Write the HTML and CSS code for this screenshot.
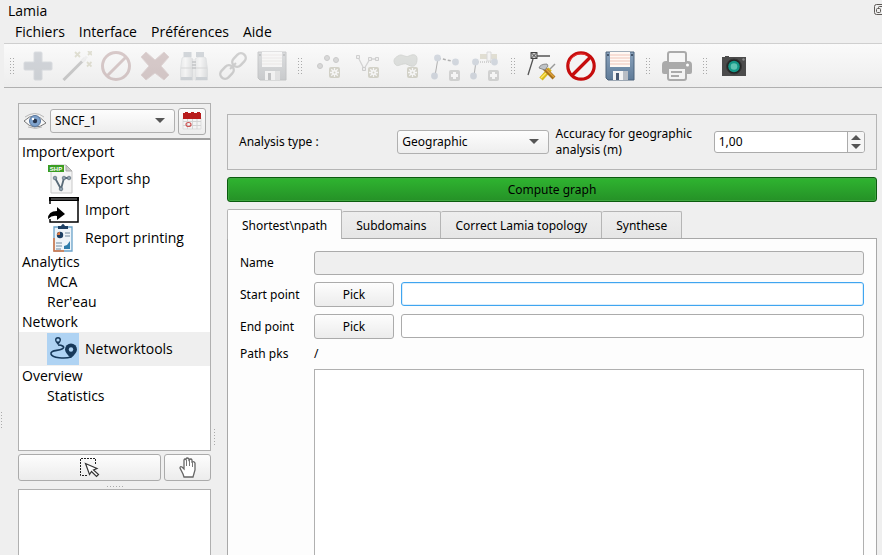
FILE: index.html
```html
<!DOCTYPE html>
<html lang="fr">
<head>
<meta charset="utf-8">
<title>Lamia</title>
<link rel="stylesheet" href="styles.css">
</head>
<body>
<svg class="defs" aria-hidden="true">
  <defs>
    <linearGradient id="steel" x1="0" y1="0" x2="0" y2="1"><stop offset="0" stop-color="#8ba3bd"/><stop offset="1" stop-color="#5f7b98"/></linearGradient>
    <linearGradient id="barrel" x1="0" y1="0" x2="1" y2="0"><stop offset="0" stop-color="#cfd2d4"/><stop offset=".4" stop-color="#f9f9f9"/><stop offset="1" stop-color="#a9aeb2"/></linearGradient>
    <symbol id="floppy" viewBox="0 0 30 30">
      <path d="M1 1h28v28H3l-2-2z" fill="url(#steel)" stroke="#4d637b"/>
      <path d="M5 1h20v15H5z" fill="#fff8f4"/>
      <path d="M5 4h20M5 7h20M5 10h20M5 13h20" stroke="#efc4b8"/>
      <path d="M8 20h15v9H8z" fill="#f4f4f4"/>
      <path d="M18 20h5v9h-5z" fill="#b9bec5"/>
      <path d="M11 22h3v7h-3z" fill="#4a5a72"/>
      <path d="M2 3h2v2H2zM26 3h2v2h-2z" fill="#44566c"/>
    </symbol>
    <symbol id="gear" viewBox="0 0 11 11">
      <rect width="11" height="11" rx="2" fill="#8c8868"/>
      <path d="M5.500 1v9M1 5.500h9M2.300 2.300l6.400 6.400M8.700 2.300L2.300 8.700" stroke="#fff" stroke-width="1.300"/>
      <circle cx="5.500" cy="5.500" r="2.500" fill="#fff"/><circle cx="5.500" cy="5.500" r="1" fill="#8c8868"/>
    </symbol>
    <symbol id="plus" viewBox="0 0 11 11">
      <rect width="11" height="11" rx="2" fill="#888a88"/>
      <path d="M5.500 2v7M2 5.500h7" stroke="#fff" stroke-width="3"/>
    </symbol>
  </defs>
</svg>

<header class="titlebar">
  <span>Lamia</span>
  <button class="float-btn" aria-label="Détacher">
    <svg width="11" height="11" viewBox="0 0 11 11"><rect x=".5" y=".5" width="11" height="10" rx="2" fill="none" stroke="#5c5855"/><path d="M4.500 4.500V3.500q0-1 1-1H9M2.500 5.500q0-1 1-1h2q1 0 1 1v2q0 1-1 1h-2q-1 0-1-1z" fill="none" stroke="#5c5855"/></svg>
  </button>
</header>
<nav class="menubar">
  <a href="#">Fichiers</a><a href="#">Interface</a><a href="#">Préférences</a><a href="#">Aide</a>
</nav>

<div class="toolbar" role="toolbar">
  <i class="grip first"></i>
  <button class="tool" aria-label="Ajouter" disabled><svg viewBox="0 0 30 30"><path d="M12 1h6q1 0 1 1v9h9q1 0 1 1v6q0 1-1 1h-9v9q0 1-1 1h-6q-1 0-1-1v-9H2q-1 0-1-1v-6q0-1 1-1h9V2q0-1 1-1z" fill="#7d8796" stroke="#98a0ac"/></svg></button>
  <button class="tool" aria-label="Outil magique" disabled><svg viewBox="0 0 30 30"><path d="M1.500 29L23 7.500" stroke="#666" stroke-width="3"/><path d="M20 10.500l5-5" stroke="#ddd" stroke-width="3"/><path d="M13 1l5 5m0-5l-5 5M26 0l4 4m0-4l-4 4M25 11l4.500 4.500m0-4.500L25 15.500" stroke="#a9a57c" stroke-width="1.800"/></svg></button>
  <button class="tool" aria-label="Annuler" disabled><svg viewBox="0 0 30 30"><circle cx="15" cy="15" r="13.500" fill="none" stroke="#8f6060" stroke-width="3"/><path d="M6 25L25 6" stroke="#8f6060" stroke-width="3"/></svg></button>
  <button class="tool" aria-label="Supprimer" disabled><svg viewBox="0 0 30 30"><path d="M6 1l9 8 9-8 5 5-8 9 8 9-5 5-9-7-9 7-5-5 8-9-8-9z" fill="#8f6464" stroke="#a98888" stroke-linejoin="round"/></svg></button>
  <button class="tool" aria-label="Rechercher" disabled><svg viewBox="0 0 30 30"><g stroke="#a0a7ad" stroke-width=".7"><path d="M3 7l2-1h6l3 2v21H1.500V18z" fill="url(#barrel)"/><path d="M27 7l-2-1h-6l-3 2v21h12.500V18z" fill="url(#barrel)"/></g><path d="M4.500 1h8v5h-8zM17 1h8v5h-8zM2 26h11v3H2zM17 26h11v3H17z" fill="#7f8c99"/><path d="M13 11h4M13 14h4M13 17h4" stroke="#555b61" stroke-width="1.500"/><path d="M2 17h11M17 17h11" stroke="#999"/></svg></button>
  <button class="tool" aria-label="Lier" disabled><svg viewBox="0 0 30 30"><g fill="none" stroke="#777" stroke-width="2.500"><rect x="-7.500" y="-4.800" width="15" height="9.600" rx="4.800" transform="translate(21 9) rotate(-45)"/><rect x="-7.500" y="-4.800" width="15" height="9.600" rx="4.800" transform="translate(9 21) rotate(-45)"/></g><path d="M12 18l6-6" stroke="#777" stroke-width="2"/></svg></button>
  <button class="tool gray" aria-label="Enregistrer" disabled><svg><use href="#floppy"/></svg></button>
  <i class="grip"></i>
  <button class="tool" aria-label="Créer un point" disabled><svg viewBox="0 0 30 30"><g fill="#999" stroke="#666"><circle cx="6" cy="15" r="2.500"/><circle cx="13" cy="7" r="2.500"/><circle cx="22" cy="9" r="2.500"/></g><use href="#gear" x="15" y="16" width="11" height="11"/></svg></button>
  <button class="tool" aria-label="Créer une ligne" disabled><svg viewBox="0 0 30 30"><path d="M5 6l6 12 6-10h7" fill="none" stroke="#888" stroke-width="1.300"/><g fill="#ddd" stroke="#777"><path d="M3.500 4.500h3v3h-3zM9.500 16.500h3v3h-3zM15.500 6.500h3v3h-3zM22.500 6.500h3v3h-3z"/></g><use href="#gear" x="15" y="16" width="11" height="11"/></svg></button>
  <button class="tool" aria-label="Créer un polygone" disabled><svg viewBox="0 0 30 30"><path d="M6 5c4-3 7 2 11 0s8-2 8 3-2 8-6 7-4-3-8-2-6 3-8 0-1-6 3-8z" fill="#a5aba3" stroke="#868c83"/><use href="#gear" x="15" y="16" width="11" height="11"/></svg></button>
  <button class="tool" aria-label="Ajouter un tronçon" disabled><svg viewBox="0 0 30 30"><path d="M4 25L7 7" stroke="#111" fill="none"/><path d="M7 7l18 4" stroke="#111" stroke-width="1.500" stroke-dasharray="3 2"/><g fill="#8494ab"><circle cx="3.500" cy="25" r="3.400"/><circle cx="6.500" cy="7" r="3.400"/><circle cx="24.500" cy="11" r="3.400"/></g><use href="#plus" x="18" y="19" width="11" height="11"/></svg></button>
  <button class="tool" aria-label="Ajouter un équipement" disabled><svg viewBox="0 0 30 30"><path d="M4 25L6 10" stroke="#111" fill="none"/><path d="M6 11h18" stroke="#111" stroke-dasharray="1 1"/><path d="M10 3h17v5H10z" fill="#b0a883"/><path d="M17 1h4v9h-4z" fill="#eee" stroke="#999"/><g fill="#8494ab"><circle cx="3.500" cy="25" r="3.400"/><circle cx="5.500" cy="11" r="3.400"/><circle cx="24.500" cy="11" r="3.400"/></g><use href="#plus" x="18" y="19" width="11" height="11"/></svg></button>
  <i class="grip"></i>
  <button class="tool" aria-label="Éditer la géométrie"><svg viewBox="0 0 30 30"><path d="M7 5h16M6 8L1 24" stroke="#555" stroke-width="1.300" fill="none"/><path d="M4 1.500h6v6H4zM4 1.500l6 6m0-6l-6 6" fill="#ccc" stroke="#444"/><path d="M28 13L18 23" stroke="#999" stroke-width="1.500"/><path d="M23 18l-9 10" stroke="#d9b91b" stroke-width="4.500"/><path d="M22 19l-8 8" stroke="#ffe867" stroke-width="1.500"/><path d="M17 17l10 10" stroke="#a8721c" stroke-width="4"/><path d="M18 17l9 9" stroke="#dfa33c" stroke-width="1.500"/><path d="M12 17q1-4 8-4l1 2-3 4-3-1z" fill="#bfc3c7" stroke="#777" stroke-width=".8"/></svg></button>
  <button class="tool" aria-label="Arrêter"><svg viewBox="0 0 30 30"><circle cx="15" cy="15" r="13.200" fill="#f4f4f4" stroke="#c60d0d" stroke-width="3.200"/><path d="M5.500 25L25 5.500" stroke="#c60d0d" stroke-width="3.200"/><path d="M3 13a12 12 0 0 1 17-9" stroke="#e33" fill="none"/></svg></button>
  <button class="tool" aria-label="Enregistrer les modifications"><svg><use href="#floppy"/></svg></button>
  <i class="grip"></i>
  <button class="tool" aria-label="Imprimer"><svg viewBox="0 0 30 30"><path d="M4 10h22q4 0 4 4v7q0 2-2 2H2q-2 0-2-2v-7q0-4 4-4z" fill="#aaa"/><path d="M6 12V3q0-2 2-2h14q2 0 2 2v9z" fill="#f6f6f6" stroke="#aaa" stroke-width="2"/><path d="M6 17h18v10q0 2-2 2H8q-2 0-2-2z" fill="#f3f3f3" stroke="#aaa" stroke-width="2"/><path d="M9 21h11M9 25h8" stroke="#aaa" stroke-width="2"/><circle cx="25.500" cy="14" r="1.500" fill="#fff"/></svg></button>
  <i class="grip"></i>
  <button class="tool" aria-label="Photographie"><svg viewBox="0 0 30 30"><path d="M3 6h3V5h4v1h17v19H3z" fill="#4b4b4b"/><circle cx="15" cy="15.500" r="7.500" fill="#222" stroke="#353535"/><circle cx="15" cy="15.500" r="5.800" fill="#149686"/><circle cx="15" cy="15.500" r="3.300" fill="#5dc3b2"/><circle cx="24.500" cy="8.500" r="1.200" fill="#888"/></svg></button>
</div>

<main class="workspace">
  <i class="grip edge"></i>
  <aside class="sidebar">
    <div class="base-bar">
      <svg class="eye" viewBox="0 0 24 20"><path d="M1 10Q12-1 23 12Q11 21 1 10z" fill="#f8f8f8" stroke="#777"/><path d="M2 6Q12-1 21 6M5 16q8 3 14 0" fill="none" stroke="#aaa" stroke-width=".8"/><circle cx="12" cy="10" r="5.500" fill="#7fa3cd" stroke="#5877a0"/><circle cx="12" cy="10" r="2.200" fill="#26334a"/><circle cx="10" cy="8" r="1.200" fill="#fff"/></svg>
      <span class="combo"><select aria-label="Base"><option>SNCF_1</option></select></span>
      <button class="btn calendar" aria-label="Calendrier"><svg viewBox="0 0 20 20"><path d="M1 7h18v11H1z" fill="#f4f4f4" stroke="#ddd"/><path d="M1 10.500h18M1 14.500h18M5.500 8v10M10.500 8v10M15 8v10" stroke="#d4d4d4"/><path d="M1 2h2V1h3v1h3V1h3v1h3V1h3v1h1v6H1z" fill="#b81c1c"/><ellipse cx="6.500" cy="13.500" rx="2.500" ry="2" fill="none" stroke="#cf5353" stroke-width="1.200"/></svg></button>
    </div>
    <ul class="tree">
      <li><a href="#">Import/export</a>
        <ul>
          <li><a class="tall" href="#"><svg class="i28" viewBox="0 0 28 30"><path d="M4 1h15l6 6v22H4z" fill="#f5f5f5" stroke="#c9c9c9"/><path d="M19 1v6h6z" fill="#ccc" stroke="#aaa"/><path d="M1 1h16v7H1z" fill="#3a9d22"/><text x="9" y="7" class="tag">SHP</text><path d="M8 14l6 11 3-11h5" fill="none" stroke="#5a6b78" stroke-width="1.800"/><g fill="#8fa0ae" stroke="#5a6b78" stroke-width=".7"><circle cx="8" cy="14" r="1.800"/><circle cx="17" cy="14" r="1.800"/><circle cx="22" cy="14" r="1.800"/><circle cx="14" cy="25" r="1.800"/></g></svg>Export shp</a></li>
          <li><a class="mid" href="#"><svg class="i33" viewBox="0 0 33 28"><path d="M3 8V2h28v24H3v-3" fill="none" stroke="#000" stroke-width="1.500"/><path d="M2 1h30v4H2z"/><path d="M4 3h26" stroke="#888"/><path d="M1 23q0-8 9-8v-4l8 7-8 6v-4q-5-1-9 3z"/></svg>Import</a></li>
          <li><a class="mid" href="#"><svg class="i33" viewBox="0 0 33 28"><path d="M7 3h18v24H7z" fill="#eef4f9" stroke="#6aa3c9" stroke-width="1.300"/><path d="M7 14v13h10" fill="none" stroke="#dc7742" stroke-width="1.500"/><path d="M11 5V2h3q2-4 4 0h3v3z" fill="#1d3f63"/><circle cx="13" cy="11" r="3.200" fill="#1d3f63"/><path d="M13 11V8a3 3 0 0 0-3 3z" fill="#df7b45"/><path d="M18 9h5M18 12h5M9 19h6M9 22h6M9 25h5" stroke="#9badbd" stroke-width="1.500"/><path d="M17 25v-3l3-1 3-4v8z" fill="#2f7dab"/></svg>Report printing</a></li>
        </ul>
      </li>
      <li><a href="#">Analytics</a>
        <ul><li><a href="#">MCA</a></li><li><a href="#">Rer'eau</a></li></ul>
      </li>
      <li><a href="#">Network</a>
        <ul><li><a class="big selected" href="#"><svg class="net" viewBox="0 0 32 32"><rect width="32" height="32" fill="#afd3f3"/><path d="M11 12c4 0 8 2 4 4s-12 1-11 5 14 5 20 3" fill="none" stroke="#17395a" stroke-width="1.600"/><path d="M11 12q-3-3-3-5a3 3 0 0 1 6 0q0 2-3 5z" fill="#17395a"/><circle cx="11" cy="7" r="1.600" fill="#afd3f3"/><path d="M24 25q-6-5-6-8.500a6 6 0 0 1 12 0Q30 20 24 25z" fill="#17395a"/><circle cx="24" cy="16.500" r="2.200" fill="#afd3f3"/></svg>Networktools</a></li></ul>
      </li>
      <li><a href="#">Overview</a>
        <ul><li><a href="#">Statistics</a></li></ul>
      </li>
    </ul>
    <div class="pickers">
      <button class="btn grow" aria-label="Sélectionner"><svg width="22" height="22" viewBox="0 0 22 22"><path d="M8 18.500H1.500v-17h15V8" fill="none" stroke="#222" stroke-dasharray="2 1"/><path d="M6.500 6.500l4 11 2-3 5 5 2-2-5-4.500 3.500-1.500z" fill="#fff" stroke="#333" stroke-width="1.200"/></svg></button>
      <button class="btn hand" aria-label="Déplacer"><svg width="18" height="22" viewBox="0 0 18 22"><path d="M5 20l-1-3-3-6q0-2 2-1l2 2V3q1-2 2 0V2q1-2 3 0v1q2-2 3 0v2q2-1 3 1v7l-2 7z" fill="#fff" stroke="#666" stroke-width="1.300"/><path d="M7.500 3v6M10.500 3v6M13.500 4v6" stroke="#777"/></svg></button>
    </div>
    <i class="grip flat"></i>
    <div class="preview"></div>
  </aside>
  <i class="grip split"></i>

  <section class="content">
    <div class="group">
      <label for="atype">Analysis type :</label>
      <span class="combo"><select id="atype"><option>Geographic</option></select></span>
      <label for="acc">Accuracy for geographic analysis (m)</label>
      <span class="spin"><input id="acc" type="text" inputmode="decimal" value="1,00"><span class="steps"><button class="up" aria-label="Plus"></button><button class="down" aria-label="Moins"></button></span></span>
    </div>
    <button class="compute">Compute graph</button>
    <div class="tabs" role="tablist">
      <button class="tab active" role="tab" aria-selected="true">Shortest\npath</button><button class="tab" role="tab">Subdomains</button><button class="tab" role="tab">Correct Lamia topology</button><button class="tab" role="tab">Synthese</button>
    </div>
    <div class="panel" role="tabpanel">
      <label for="name">Name</label>
      <input id="name" class="field wide" type="text" disabled>
      <label for="start">Start point</label>
      <button class="btn">Pick</button>
      <input id="start" class="field focus" type="text">
      <label for="end">End point</label>
      <button class="btn">Pick</button>
      <input id="end" class="field" type="text">
      <label for="pks">Path pks</label>
      <span class="wide">/</span>
      <textarea id="pks" class="result"></textarea>
    </div>
  </section>
</main>
</body>
</html>
```
FILE: styles.css
```css
* { box-sizing: border-box; }
body {
  margin: 0;
  height: 100vh;
  overflow: hidden;
  display: flex;
  flex-direction: column;
  background: #efefef;
  color: #000;
  font: 14px/20px "Open Sans", "Noto Sans", sans-serif;
}
button, input, select, textarea { font: inherit; color: inherit; margin: 0; }
button { padding: 0; border: 0; background: none; }
a { color: inherit; text-decoration: none; }
ul { list-style: none; margin: 0; padding: 0; }
svg { display: block; flex: none; }
.defs { position: absolute; width: 0; height: 0; }

.titlebar { display: flex; justify-content: space-between; padding-left: 8px; height: 22px; }
.titlebar span { padding-top: 1px; }
.float-btn { align-self: flex-start; width: 8px; height: 11px; margin-top: 4px; overflow: hidden; }
.menubar { display: flex; gap: 14px; height: 21px; padding-left: 15px; }

.toolbar {
  display: flex;
  align-items: center;
  flex: none;
  height: 45px;
  margin-left: 4px;
  border-top: 1px solid #cfcfcf;
  border-bottom: 1px solid #b0b0b0;
  background: linear-gradient(#fafafa, #ededed);
}
.tool { display: grid; place-items: center; width: 39px; height: 43px; flex: none; }
.tool svg { width: 30px; height: 30px; }
.tool:disabled svg { opacity: .3; }
.tool.gray svg { filter: grayscale(.8); }

.grip {
  flex: none;
  width: 18px;
  height: 17px;
  background: radial-gradient(circle, #aaa 1px, transparent 1px) 0 0 / 3px 3px content-box;
  padding: 0 6px;
}
.toolbar .grip.first { width: 14px; padding: 0 3px 0 5px; }
.grip.edge { width: 18px; padding: 0 15px 0 0; align-self: flex-start; margin-top: 323px; }
.grip.split { width: 16px; padding: 0 11px 0 2px; align-self: flex-start; margin-top: 340px; }
.grip.flat { width: 18px; height: 3px; padding: 0; margin: 4px auto 1px; }

.workspace { display: flex; flex: 1; min-height: 0; padding-right: 5px; }
.sidebar { display: flex; flex-direction: column; width: 193px; flex: none; padding-top: 15px; }
.base-bar {
  display: flex;
  align-items: center;
  gap: 3px;
  height: 37px;
  flex: none;
  padding: 0 4px;
  border: 1px solid #b0b0b0;
  border-bottom: 2px solid #a0a0a0;
  font: 12px/16px "Noto Sans", sans-serif;
}
.eye { width: 24px; height: 20px; }

.combo { position: relative; display: flex; flex: 1; height: 24px; }
.combo select {
  appearance: none;
  width: 100%;
  padding: 0 4px;
  border: 1px solid #b0b0b0;
  border-radius: 3px;
  background: linear-gradient(#fdfdfd, #eee);
}
.combo::after {
  content: "";
  position: absolute;
  right: 10px;
  top: 9px;
  border: 5px solid transparent;
  border-top-color: #555;
  border-bottom: 0;
}
.btn {
  display: grid;
  place-items: center;
  border: 1px solid #ababab;
  border-radius: 3px;
  background: linear-gradient(#fdfdfd, #ececec);
}
.calendar { width: 28px; height: 27px; }
.calendar svg { width: 20px; height: 20px; }

.tree {
  height: 311px;
  flex: none;
  padding-top: 2px;
  border: 1px solid #b0b0b0;
  border-top: 0;
  background: #fff;
}
.tree a { display: flex; align-items: center; height: 20px; padding-left: 3px; }
.tree ul a { padding-left: 28px; }
.tree a.tall { height: 34px; gap: 5px; }
.tree a.mid { height: 28px; gap: 5px; }
.tree a.big { height: 34px; gap: 6px; }
.tree a.selected { background: #efefef; }
.i28 { width: 28px; height: 30px; }
.i33 { width: 33px; height: 28px; }
.net { width: 32px; height: 32px; }
.tag { font: bold 6px "Liberation Sans", sans-serif; fill: #fff; text-anchor: middle; }

.pickers { display: flex; gap: 3px; height: 27px; margin-top: 3px; flex: none; }
.grow { flex: 1; }
.hand { width: 47px; }
.preview { flex: 1; border: 1px solid #b0b0b0; border-bottom: 0; background: #fff; }

.content {
  display: flex;
  flex-direction: column;
  flex: 1;
  min-width: 0;
  padding-top: 26px;
  font: 12px/16px "Noto Sans", sans-serif;
}
.group {
  display: grid;
  grid-template-columns: repeat(4, 1fr);
  gap: 7px;
  align-items: center;
  height: 56px;
  flex: none;
  padding: 0 11px;
  border: 1px solid #b5b5b5;
}
.spin {
  display: flex;
  height: 22px;
  border: 1px solid #ababab;
  border-radius: 3px;
  background: #fff;
  overflow: hidden;
}
.spin input { flex: 1; min-width: 0; border: 0; padding: 0 4px; background: none; }
.steps { display: grid; align-content: center; justify-items: center; gap: 4px; width: 17px; border-left: 1px solid #ababab; background: #f6f6f6; }
.up, .down { width: 10px; height: 5px; border: 5px solid transparent; }
.up { border-bottom-color: #555; border-top: 0; }
.down { border-top-color: #555; border-bottom: 0; }

.compute {
  height: 25px;
  flex: none;
  margin: 7px 0;
  border: 1px solid #0a5c0e;
  border-radius: 3px;
  background: linear-gradient(#2fb430, #259127);
  box-shadow: inset 0 0 0 1px #3ea63f;
}
.tabs { display: flex; align-items: flex-end; height: 29px; flex: none; }
.tab {
  height: 27px;
  padding: 2px 14px 0;
  border: 1px solid #b5b5b5;
  border-left: 0;
  border-bottom: 0;
  border-radius: 2px 2px 0 0;
  background: linear-gradient(#eee, #e6e6e6);
}
.tab.active { height: 30px; margin-bottom: -1px; border-left: 1px solid #b5b5b5; background: #fdfdfd; z-index: 1; }

.panel {
  display: grid;
  grid-template-columns: 67px 80px 1fr;
  grid-template-rows: 24px 25px 25px 16px 1fr;
  gap: 7px;
  align-items: center;
  flex: 1;
  min-height: 0;
  padding: 12px 12px 0;
  border: 1px solid #a8a8a8;
  border-bottom: 0;
  background: #fdfdfd;
}
.panel label { white-space: nowrap; }
.panel .btn { height: 25px; }
.field { height: 24px; width: 100%; align-self: start; padding: 0 4px; border: 1px solid #ababab; border-radius: 3px; background: #fff; }
.field:disabled { background: #efefef; }
.field.focus { border-color: #3fa5f0; box-shadow: inset 0 0 0 1px #dceefb; }
.wide { grid-column: 2 / 4; }
.result { grid-column: 2 / 4; align-self: stretch; resize: none; border: 1px solid #b0b0b0; border-bottom: 0; background: #fff; }
```
